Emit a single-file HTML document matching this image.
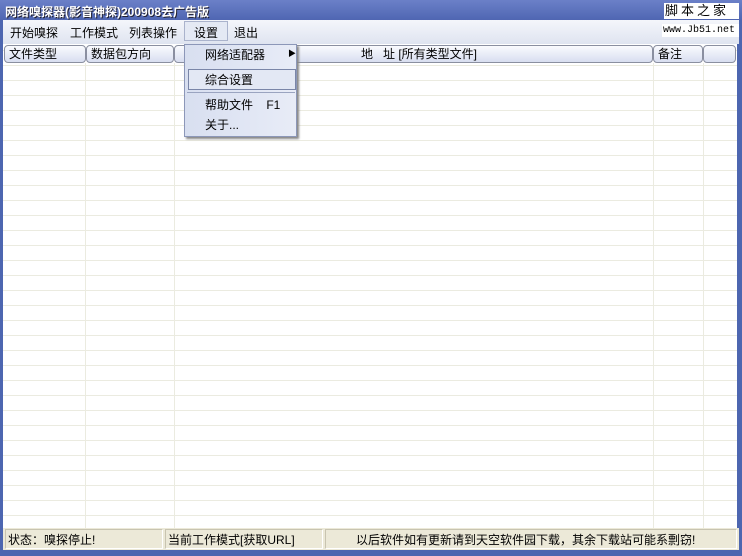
<!DOCTYPE html><html><head><meta charset="utf-8"><style>
*{margin:0;padding:0;box-sizing:border-box}
body{width:742px;height:556px;position:relative;overflow:hidden;background:#4d66b0;font:12px "Liberation Sans","Noto Sans CJK SC",sans-serif;color:#000}
.a{position:absolute}
#title{left:0;top:0;width:742px;height:20px;background:linear-gradient(#6b80c8,#4f66b2);color:#fff;font-weight:bold;font-size:12px;padding:3px 0 0 5px;text-shadow:1px 1px #223}
#menu{left:3px;top:20px;width:736px;height:24px;background:linear-gradient(#f4f6fb,#dfe4f0)}
#menu span{position:absolute;top:4px}
#list{left:3px;top:44px;width:734px;height:484px;background:#fff linear-gradient(to bottom,transparent 14px,#ebebe0 14px);background-size:100% 15px;background-position:0 7px}
.hd{position:absolute;top:45px;height:18px;background:linear-gradient(#fafbfe,#d8def0);border:1px solid #8a8fa0;border-radius:4px;padding:1px 4px;line-height:15px}
.vl{position:absolute;top:63px;width:1px;height:465px;background:#ebebe0}
#status{left:3px;top:528px;width:736px;height:22px;background:#ece9d8}
.sp{position:absolute;top:1px;height:20px;border:1px solid #c8c4b0;border-right-color:#fff;border-bottom-color:#fff;padding:2px 2px;line-height:16px;white-space:nowrap}
#dd{left:184px;top:44px;width:113px;height:93px;background:linear-gradient(to right,#d8dff0,#e8ecf7);border:1px solid #8c97b8;box-shadow:2px 2px 2px #888}
#dd div{position:absolute;left:20px}
</style></head><body>
<div id="title" class="a">网络嗅探器(影音神探)200908去广告版</div>
<div class="a" style="left:0;top:20px;width:3px;height:536px;background:#4d66b0"></div>
<div id="menu" class="a">
<span style="left:7px">开始嗅探</span><span style="left:67px">工作模式</span><span style="left:126px">列表操作</span>
<div style="position:absolute;left:181px;top:1px;width:44px;height:20px;background:#e4e9f4;border:1px solid #aab3cc"></div>
<span style="left:191px">设置</span><span style="left:231px">退出</span></div>
<div class="a" style="left:664px;top:3px;width:75px;height:16px;background:#fff;font-size:13px;padding-left:1px;letter-spacing:3px;line-height:16px">脚本之家</div>
<div class="a" style="left:662px;top:24px;width:77px;height:13px;background:#fff;font:10px 'Liberation Mono',monospace;line-height:13px;padding-left:1px;white-space:nowrap;overflow:hidden">www.Jb51.net</div>
<div id="list" class="a"></div>
<div class="vl" style="left:85px"></div><div class="vl" style="left:174px"></div><div class="vl" style="left:653px"></div><div class="vl" style="left:703px"></div>
<div class="hd" style="left:4px;width:82px">文件类型</div>
<div class="hd" style="left:86px;width:88px">数据包方向</div>
<div class="hd" style="left:174px;width:479px;padding-left:186px">地&nbsp;&nbsp;&nbsp;址 [所有类型文件]</div>
<div class="hd" style="left:653px;width:50px">备注</div>
<div class="hd" style="left:703px;width:33px"></div>
<div id="dd" class="a">
<div style="top:1px">网络适配器</div>
<div style="left:103px!important;top:3px;font-size:8px">▶</div>
<div style="left:3px;top:24px;width:108px;height:21px;border:1px solid #7a86a8;background:#e3e8f4"></div>
<div style="top:26px">综合设置</div>
<div style="left:2px;top:47px;width:108px;height:1px;background:#9aa4c0"></div>
<div style="top:51px">帮助文件&nbsp;&nbsp;&nbsp;&nbsp;F1</div>
<div style="top:71px">关于...</div>
</div>
<div id="status" class="a">
<div class="sp" style="left:2px;width:158px">状态：嗅探停止!</div>
<div class="sp" style="left:162px;width:158px">当前工作模式[获取URL]</div>
<div class="sp" style="left:322px;width:412px;padding-left:30px">以后软件如有更新请到天空软件园下载，其余下载站可能系剽窃!</div>
</div>
</body></html>
